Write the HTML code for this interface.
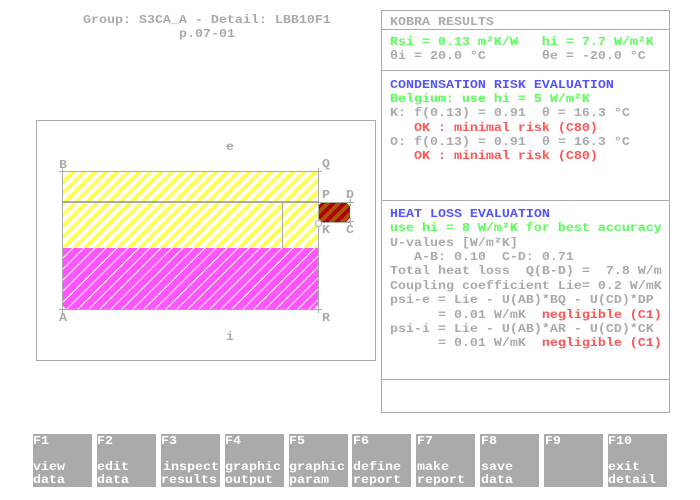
<!DOCTYPE html>
<html>
<head>
<meta charset="utf-8">
<style>
html,body{margin:0;padding:0;background:#fff;width:700px;height:500px;overflow:hidden}
svg{position:absolute;left:0;top:0;display:block}
text{font-family:"Liberation Mono",monospace;font-size:13.33px;font-weight:bold;white-space:pre;fill:#aaa}
.g{fill:#55ff55}.b{fill:#5555ff}.r{fill:#ff5555}.w{fill:#fff}
</style>
</head>
<body>
<svg width="700" height="500" viewBox="0 0 700 500">
<defs>
<pattern id="yh" x="62" y="172" width="11" height="11" patternUnits="userSpaceOnUse"><rect width="11" height="11" fill="#fff"/><path d="M-3 14L14 -3M-3 3L3 -3M8 14L14 8" stroke="#ffff55" stroke-width="3.9" fill="none" shape-rendering="crispEdges"/></pattern>
<pattern id="mh" x="62" y="248" width="11" height="11" patternUnits="userSpaceOnUse"><rect width="11" height="11" fill="#ff55ff"/><path d="M-3 14L14 -3M-3 3L3 -3M8 14L14 8" stroke="#fff" stroke-width="1" fill="none"/></pattern>
<pattern id="rh" x="318" y="202" width="11" height="11" patternUnits="userSpaceOnUse"><rect width="11" height="11" fill="#aa0000"/><path d="M-3 14L14 -3M-3 3L3 -3M8 14L14 8" stroke="#aa5500" stroke-width="3.9" fill="none" shape-rendering="crispEdges"/></pattern>
</defs>

<text transform="translate(83,23) scale(1,.9)">Group: S3CA_A - Detail: LBB10F1</text>
<text transform="translate(179,37) scale(1,.9)">p.07-01</text>

<!-- drawing box -->
<rect x="36.5" y="120.5" width="339" height="240" fill="none" stroke="#aaa"/>
<rect x="62" y="172" width="256" height="30" fill="url(#yh)"/>
<rect x="62" y="202" width="256" height="46" fill="url(#yh)"/>
<polygon points="62,248 318,248 318,305 314,309 66,309 62,305" fill="url(#mh)"/>
<polygon points="318,206 322,202 346,202 350,206 350,218 346,222 322,222 318,218" fill="url(#rh)"/>
<g stroke="#aaa" fill="none">
<path d="M62.5 171.5H318.5M318.5 171.5V309M62.5 171.5V309M62 309.5H318M282.5 203V248M319 202.5H350M318.5 222.5H350"/>
<path d="M62 201.5H318M62 202.5H318"/>
<path d="M59 171.5H66M62.5 168V175M315 171.5H322M318.5 168V175M315 202.5H322M318.5 199V206M347 202.5H354M350.5 199V206M347 221.5H354M350.5 218V225M59 309.5H66M62.5 306V313M315 309.5H322M318.5 306V313"/>
<circle cx="318.5" cy="223.5" r="3" fill="#fff"/>
</g>
<text transform="translate(59,168) scale(1,.9)">B</text>
<text transform="translate(322,167) scale(1,.9)">Q</text>
<text transform="translate(322,198) scale(1,.9)">P</text>
<text transform="translate(346,198) scale(1,.9)">D</text>
<text transform="translate(322,233) scale(1,.9)">K</text>
<text transform="translate(346,233) scale(1,.9)">C</text>
<text transform="translate(59,321) scale(1,.9)">A</text>
<text transform="translate(322,321) scale(1,.9)">R</text>
<text transform="translate(226,150) scale(1,.9)">e</text>
<text transform="translate(226,340) scale(1,.9)">i</text>

<!-- results panel -->
<rect x="381.5" y="10.5" width="288" height="402" fill="none" stroke="#aaa"/>
<path d="M382 29.5H669M382 70.5H669M382 200.5H669M382 379.5H669" stroke="#aaa" fill="none"/>

<text transform="translate(390,25) scale(1,.9)">KOBRA RESULTS</text>
<text class="g" transform="translate(390,45) scale(1,.9)">Rsi = 0.13 m²K/W   hi = 7.7 W/m²K</text>
<text transform="translate(390,59) scale(1,.9)">θi = 20.0 °C       θe = -20.0 °C</text>

<text class="b" transform="translate(390,88) scale(1,.9)">CONDENSATION RISK EVALUATION</text>
<text class="g" transform="translate(390,102) scale(1,.9)">Belgium: use hi = 5 W/m²K</text>
<text transform="translate(390,116) scale(1,.9)">K: f(0.13) = 0.91  θ = 16.3 °C</text>
<text class="r" transform="translate(390,131) scale(1,.9)">   OK : minimal risk (C80)</text>
<text transform="translate(390,145) scale(1,.9)">O: f(0.13) = 0.91  θ = 16.3 °C</text>
<text class="r" transform="translate(390,159) scale(1,.9)">   OK : minimal risk (C80)</text>

<text class="b" transform="translate(390,217) scale(1,.9)">HEAT LOSS EVALUATION</text>
<text class="g" transform="translate(390,231) scale(1,.9)">use hi = 8 W/m²K for best accuracy</text>
<text transform="translate(390,246) scale(1,.9)">U-values [W/m²K]</text>
<text transform="translate(390,260) scale(1,.9)">   A-B: 0.10  C-D: 0.71</text>
<text transform="translate(390,274) scale(1,.9)">Total heat loss  Q(B-D) =  7.8 W/m</text>
<text transform="translate(390,289) scale(1,.9)">Coupling coefficient Lie= 0.2 W/mK</text>
<text transform="translate(390,303) scale(1,.9)">psi-e = Lie - U(AB)*BQ - U(CD)*DP</text>
<text transform="translate(390,318) scale(1,.9)">      = 0.01 W/mK</text>
<text class="r" transform="translate(390,318) scale(1,.9)">                   negligible (C1)</text>
<text transform="translate(390,332) scale(1,.9)">psi-i = Lie - U(AB)*AR - U(CD)*CK</text>
<text transform="translate(390,346) scale(1,.9)">      = 0.01 W/mK</text>
<text class="r" transform="translate(390,346) scale(1,.9)">                   negligible (C1)</text>

<!-- function keys -->
<g fill="#aaa">
<rect x="33" y="434" width="59" height="53"/>
<rect x="97" y="434" width="59" height="53"/>
<rect x="161" y="434" width="59" height="53"/>
<rect x="225" y="434" width="59" height="53"/>
<rect x="289" y="434" width="59" height="53"/>
<rect x="352" y="434" width="59" height="53"/>
<rect x="416" y="434" width="59" height="53"/>
<rect x="480" y="434" width="59" height="53"/>
<rect x="544" y="434" width="59" height="53"/>
<rect x="608" y="434" width="59" height="53"/>
</g>
<text class="w" transform="translate(33,444) scale(1,.9)">F1</text>
<text class="w" transform="translate(33,470) scale(1,.9)">view</text>
<text class="w" transform="translate(33,483) scale(1,.9)">data</text>
<text class="w" transform="translate(97,444) scale(1,.9)">F2</text>
<text class="w" transform="translate(97,470) scale(1,.9)">edit</text>
<text class="w" transform="translate(97,483) scale(1,.9)">data</text>
<text class="w" transform="translate(161,444) scale(1,.9)">F3</text>
<text class="w" transform="translate(163,470) scale(1,.9)">inspect</text>
<text class="w" transform="translate(161,483) scale(1,.9)">results</text>
<text class="w" transform="translate(225,444) scale(1,.9)">F4</text>
<text class="w" transform="translate(225,470) scale(1,.9)">graphic</text>
<text class="w" transform="translate(225,483) scale(1,.9)">output</text>
<text class="w" transform="translate(289,444) scale(1,.9)">F5</text>
<text class="w" transform="translate(289,470) scale(1,.9)">graphic</text>
<text class="w" transform="translate(289,483) scale(1,.9)">param</text>
<text class="w" transform="translate(353,444) scale(1,.9)">F6</text>
<text class="w" transform="translate(353,470) scale(1,.9)">define</text>
<text class="w" transform="translate(353,483) scale(1,.9)">report</text>
<text class="w" transform="translate(417,444) scale(1,.9)">F7</text>
<text class="w" transform="translate(417,470) scale(1,.9)">make</text>
<text class="w" transform="translate(417,483) scale(1,.9)">report</text>
<text class="w" transform="translate(481,444) scale(1,.9)">F8</text>
<text class="w" transform="translate(481,470) scale(1,.9)">save</text>
<text class="w" transform="translate(481,483) scale(1,.9)">data</text>
<text class="w" transform="translate(545,444) scale(1,.9)">F9</text>
<text class="w" transform="translate(608,444) scale(1,.9)">F10</text>
<text class="w" transform="translate(608,470) scale(1,.9)">exit</text>
<text class="w" transform="translate(608,483) scale(1,.9)">detail</text>
</svg>
</body>
</html>
